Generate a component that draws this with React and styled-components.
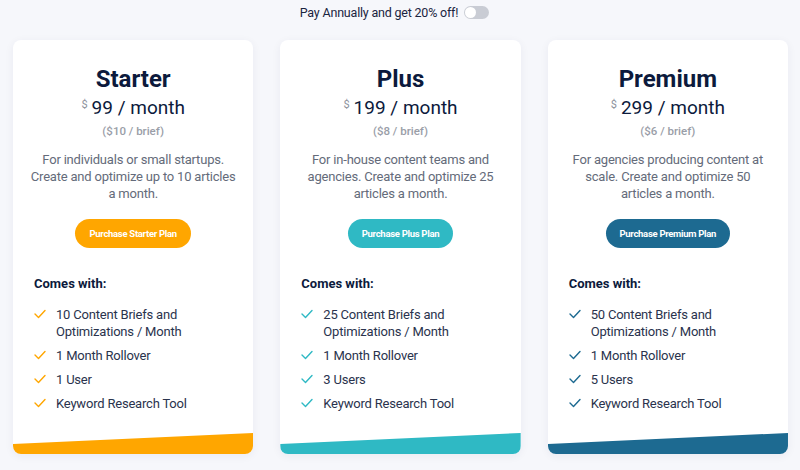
import styled, { createGlobalStyle } from "styled-components";

const GlobalStyle = createGlobalStyle`
  html, body {
    margin: 0;
    padding: 0;
    background: #f6f7fb;
    font-family: Roboto, "Noto Sans", sans-serif;
    color: #0c1a3c;
  }
  * { box-sizing: border-box; }
`;

const plans = [
  {
    name: "Starter",
    price: "99",
    brief: "($10 / brief)",
    desc: "For individuals or small startups. Create and optimize up to 10 articles a month.",
    color: "#ffa600",
    button: "Purchase Starter Plan",
    items: ["10 Content Briefs and Optimizations / Month", "1 Month Rollover", "1 User", "Keyword Research Tool"],
  },
  {
    name: "Plus",
    price: "199",
    brief: "($8 / brief)",
    desc: "For in-house content teams and agencies. Create and optimize 25 articles a month.",
    color: "#2fb9c4",
    button: "Purchase Plus Plan",
    items: ["25 Content Briefs and Optimizations / Month", "1 Month Rollover", "3 Users", "Keyword Research Tool"],
  },
  {
    name: "Premium",
    price: "299",
    brief: "($6 / brief)",
    desc: "For agencies producing content at scale. Create and optimize 50 articles a month.",
    color: "#1d6a91",
    button: "Purchase Premium Plan",
    items: ["50 Content Briefs and Optimizations / Month", "1 Month Rollover", "5 Users", "Keyword Research Tool"],
  },
];

const Page = styled.div`
  width: 800px;
  height: 470px;
  padding: 0 12px 0 13px;
`;

const TopBar = styled.div`
  height: 40px;
  display: flex;
  justify-content: center;
  align-items: flex-start;
  padding: 5px 12px 0 0;
  gap: 6px;
  font-size: 12.5px;
  letter-spacing: -0.2px;
  color: #1a2440;
  line-height: 16px;
`;

const Toggle = styled.span`
  width: 25px;
  height: 13px;
  margin-top: 1px;
  border-radius: 7px;
  background: #c9ccd4;
  position: relative;

  &::after {
    content: "";
    position: absolute;
    left: 1px;
    top: 1px;
    width: 11px;
    height: 11px;
    border-radius: 50%;
    background: #ffffff;
  }
`;

const Grid = styled.div`
  display: grid;
  grid-template-columns: repeat(3, 1fr);
  gap: 27px;
`;

const Card = styled.div`
  height: 414px;
  background: #ffffff;
  border-radius: 8px;
  box-shadow: 0 2px 10px rgba(30, 40, 80, 0.06);
  display: flex;
  flex-direction: column;
  overflow: hidden;
  text-align: center;
`;

const Title = styled.h2`
  margin: 25px 0 0;
  font-size: 24px;
  line-height: 28px;
  font-weight: 700;
  color: #0c1a3c;
`;

const Price = styled.div`
  margin-top: 2px;
  display: flex;
  justify-content: center;
  align-items: flex-start;
  font-size: 19px;
  line-height: 26px;
  font-weight: 400;
  color: #0c1a3c;
`;

const Dollar = styled.span`
  font-size: 11px;
  line-height: 14px;
  margin-top: 3px;
  color: #8d929c;
  margin-right: 4px;
  font-weight: 400;
`;

const Brief = styled.div`
  margin-top: 2px;
  font-size: 11.5px;
  line-height: 16px;
  font-weight: 500;
  color: #9a9ea8;
`;

const Desc = styled.p`
  margin: 11.5px 0 0;
  padding: 0 16px;
  font-size: 13px;
  line-height: 17px;
  letter-spacing: -0.2px;
  color: #646b7a;
`;

const BuyButton = styled.button`
  align-self: center;
  margin-top: 17px;
  height: 29px;
  padding: 0 14px;
  border: none;
  border-radius: 15px;
  background: ${(p) => p.$color};
  color: #ffffff;
  font-family: Roboto, sans-serif;
  font-size: 9.5px;
  letter-spacing: -0.3px;
  font-weight: 700;
  cursor: pointer;
`;

const Comes = styled.div`
  margin-top: 27px;
  padding: 0 21px;
  text-align: left;
  font-size: 13px;
  line-height: 18px;
  font-weight: 700;
  color: #0c1a3c;
`;

const List = styled.ul`
  list-style: none;
  margin: 13px 0 0;
  padding: 0 21px;
  display: flex;
  flex-direction: column;
  gap: 7px;
  text-align: left;
`;

const Item = styled.li`
  display: flex;
  gap: 10px;
  font-size: 13px;
  line-height: 17px;
  letter-spacing: -0.2px;
  color: #2a334d;

  svg {
    flex: none;
    margin-top: 3px;
  }
`;

const Band = styled.div`
  margin-top: auto;
  height: 21px;
  background: ${(p) => p.$color};
  clip-path: polygon(0 52%, 100% 0, 100% 100%, 0 100%);
`;

const Check = ({ color }) => (
  <svg width="12" height="10" viewBox="0 0 12 10" fill="none">
    <path d="M1 5l3.5 3.5L11 1.5" stroke={color} strokeWidth="1.4" strokeLinecap="round" strokeLinejoin="round" />
  </svg>
);

export default function App() {
  return (
    <Page>
      <GlobalStyle />
      <TopBar>
        Pay Annually and get 20% off!
        <Toggle />
      </TopBar>
      <Grid>
        {plans.map((plan) => (
          <Card key={plan.name}>
            <Title>{plan.name}</Title>
            <Price>
              <Dollar>$</Dollar>
              {plan.price} / month
            </Price>
            <Brief>{plan.brief}</Brief>
            <Desc>{plan.desc}</Desc>
            <BuyButton $color={plan.color}>{plan.button}</BuyButton>
            <Comes>Comes with:</Comes>
            <List>
              {plan.items.map((item) => (
                <Item key={item}>
                  <Check color={plan.color} />
                  <span>{item}</span>
                </Item>
              ))}
            </List>
            <Band $color={plan.color} />
          </Card>
        ))}
      </Grid>
    </Page>
  );
}
